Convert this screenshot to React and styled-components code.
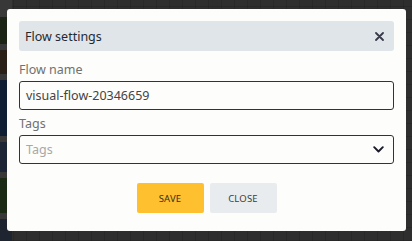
import styled, { createGlobalStyle } from "styled-components";

const Global = createGlobalStyle`
  html, body {
    margin: 0;
    padding: 0;
  }
  body {
    width: 412px;
    height: 241px;
    overflow: hidden;
    background: #2d2d2d;
    font-family: "Noto Sans", "Open Sans", sans-serif;
  }
`;

const Canvas = styled.div`
  position: relative;
  width: 412px;
  height: 241px;
  display: flex;
  background-color: #2e2e2e;
  background-image:
    repeating-linear-gradient(90deg, rgba(0,0,0,0.12) 0 1px, transparent 1px 13px),
    repeating-linear-gradient(0deg, rgba(0,0,0,0.12) 0 1px, transparent 1px 13px);
`;

const Sidebar = styled.div`
  width: 12px;
  display: flex;
  flex-direction: column;
  gap: 6px;
  padding-top: 17px;
  background: #383838;
`;

const Block = styled.div`
  height: ${(p) => p.h}px;
  background: ${(p) => p.c};
`;

const Modal = styled.div`
  position: absolute;
  left: 7px;
  top: 9px;
  width: 399px;
  height: 222px;
  box-sizing: border-box;
  background: #fdfdfb;
  border-radius: 3px;
  padding: 12px 12px 0 12px;
  display: flex;
  flex-direction: column;
`;

const Header = styled.div`
  height: 30px;
  background: #dfe5e8;
  border-radius: 3px;
  display: flex;
  align-items: center;
  justify-content: space-between;
  padding: 0 9px 0 6px;
  h1 {
    margin: 0;
    font-size: 12.5px;
    font-weight: 400;
    color: #1f2a33;
  }
`;

const CloseX = styled.button`
  border: none;
  background: none;
  padding: 0;
  width: 12px;
  height: 12px;
  display: flex;
  align-items: center;
  justify-content: center;
  color: #3a3a4a;
`;

const Label = styled.label`
  display: block;
  font-size: 12.5px;
  color: #707070;
  margin-top: ${(p) => p.mt}px;
  margin-bottom: 3px;
  line-height: 16px;
`;

const Field = styled.div`
  height: 29px;
  box-sizing: border-box;
  border: 1.5px solid #333;
  border-radius: 3px;
  display: flex;
  align-items: center;
  justify-content: space-between;
  padding: 0 9px 0 6px;
  font-size: 12.5px;
  color: ${(p) => (p.placeholder ? "#a8a8a8" : "#444")};
`;

const Buttons = styled.div`
  display: flex;
  justify-content: center;
  gap: 6px;
  margin-top: 19px;
`;

const Button = styled.button`
  width: 67px;
  height: 30px;
  border: none;
  border-radius: 2px;
  background: ${(p) => (p.primary ? "#fec02f" : "#e8ecef")};
  color: ${(p) => (p.primary ? "#3a3020" : "#3c3c3c")};
  font-family: "Noto Sans", sans-serif;
  font-size: 9.5px;
  font-weight: 400;
  letter-spacing: 0.2px;
  text-transform: uppercase;
`;

export default function App() {
  return (
    <>
      <Global />
      <Canvas>
        <Sidebar>
          <Block h={30} c="#1b2414" />
          <Block h={27} c="#2a2018" />
          <Block h={63} c="#0f1e33" />
          <Block h={34} c="#1c2535" />
          <Block h={39} c="#1a2a14" />
          <Block h={25} c="#1f2530" />
        </Sidebar>
        <Modal>
          <Header>
            <h1>Flow settings</h1>
            <CloseX>
              <svg width="9" height="9" viewBox="0 0 9 9">
                <path d="M1 1 L8 8 M8 1 L1 8" stroke="currentColor" strokeWidth="1.8" strokeLinecap="round" />
              </svg>
            </CloseX>
          </Header>
          <Label mt={11}>Flow name</Label>
          <Field>visual-flow-20346659</Field>
          <Label mt={6}>Tags</Label>
          <Field placeholder="1">
            Tags
            <svg width="11" height="7" viewBox="0 0 11 7">
              <path d="M1.2 1.2 L5.5 5.5 L9.8 1.2" fill="none" stroke="#1a1a2a" strokeWidth="1.9" strokeLinecap="round" strokeLinejoin="round" />
            </svg>
          </Field>
          <Buttons>
            <Button primary>Save</Button>
            <Button>Close</Button>
          </Buttons>
        </Modal>
      </Canvas>
    </>
  );
}
